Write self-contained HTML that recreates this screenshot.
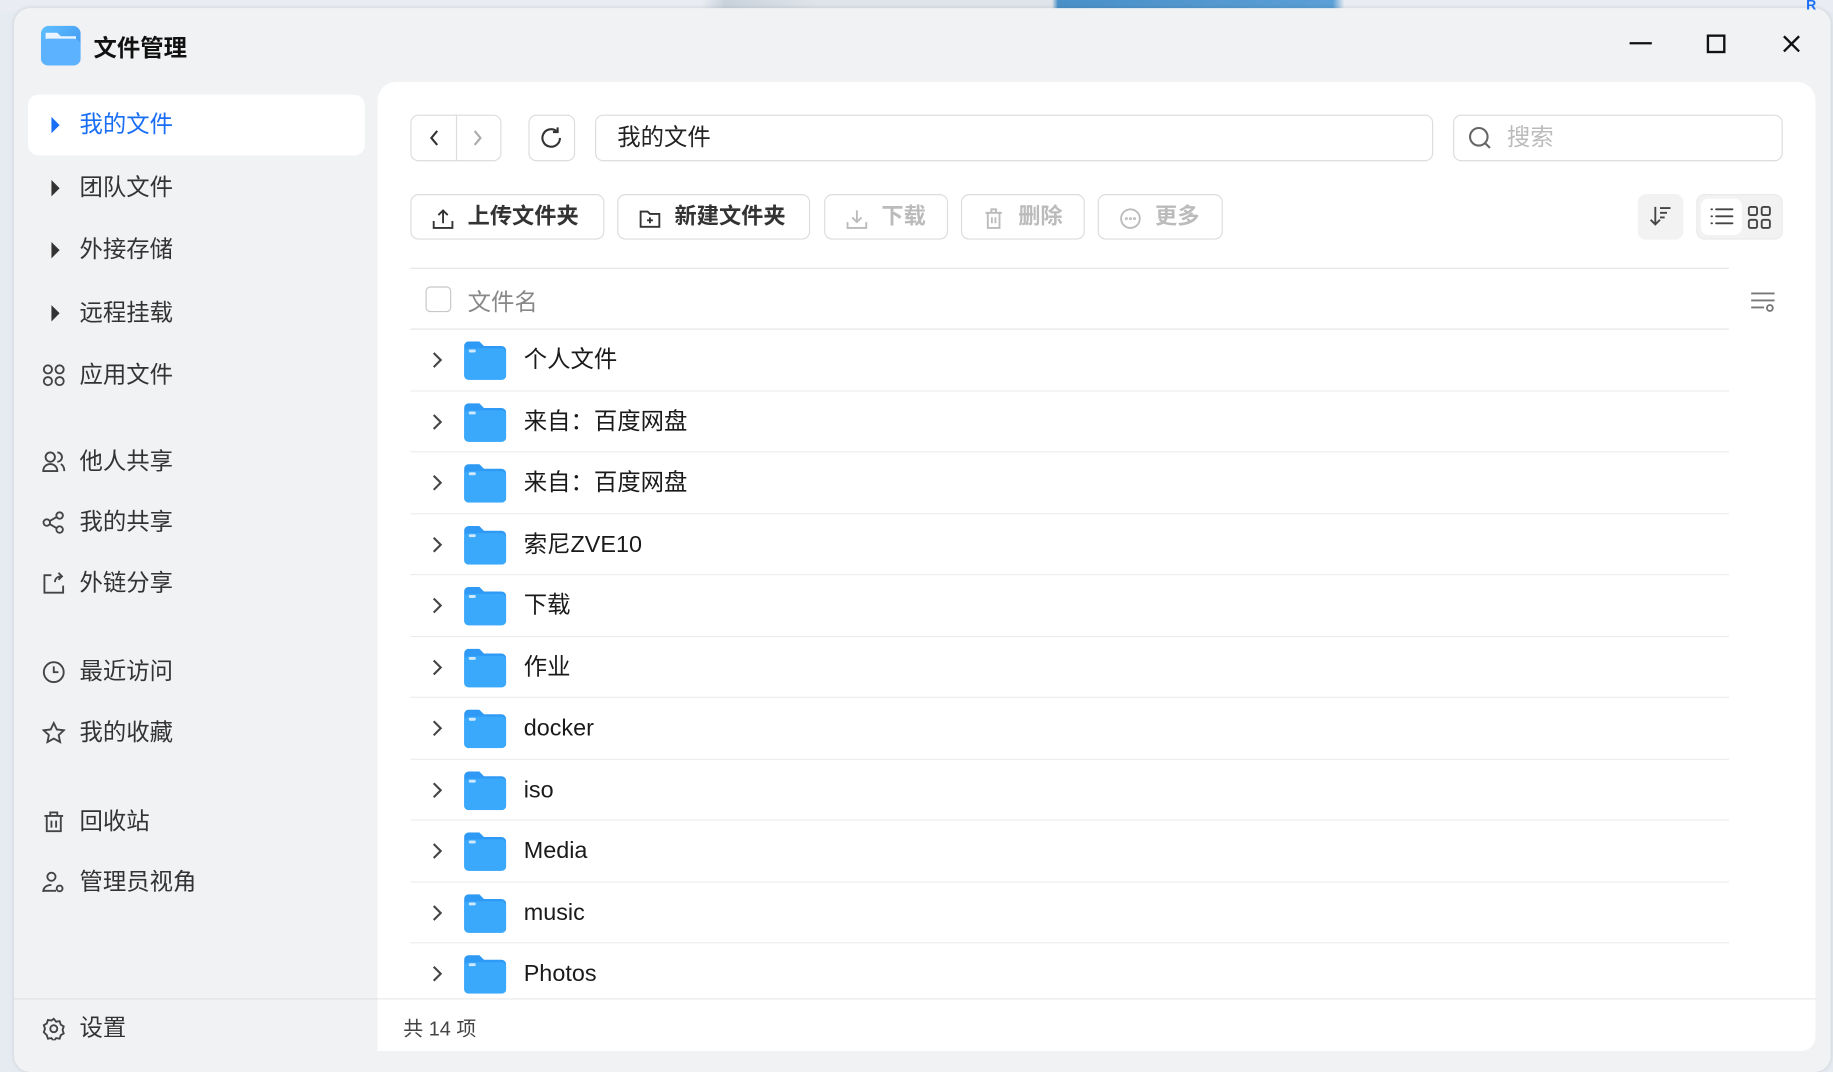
<!DOCTYPE html>
<html><head><meta charset="utf-8"><style>
*{box-sizing:border-box;margin:0;padding:0}
html,body{width:1833px;height:1061px;overflow:hidden;background:#e6ebf2}
body{font-family:"Liberation Sans","Noto Sans CJK SC",sans-serif;color:#222}
#w{position:absolute;left:0;top:0;width:1568px;height:908px;transform:scale(1.16901);transform-origin:0 0}
.bgtop{position:absolute;left:0;top:0;width:1568px;height:10px;background:linear-gradient(90deg,#e9edf3 0,#e9edf3 600px,#c9d2dc 620px,#dfe4ea 700px,#dfe4ea 900px,#4a90c8 905px,#5aa0d6 1140px,#e9edf3 1150px)}
.win{position:absolute;left:12px;top:7px;width:1554px;height:910px;background:#f1f2f4;border-radius:14px;box-shadow:0 0 4px rgba(0,0,0,.12)}
.a{position:absolute}
.title{left:80px;top:25px;font-size:20px;font-weight:bold;color:#111}
.si{position:absolute;left:0;height:52px;width:290px;font-size:20px;color:#333;line-height:52px}
.si span{position:absolute;left:56px}
.si svg{position:absolute;left:24px;top:16px}
.act{left:24px!important;top:81px;width:288px;background:#fff;border-radius:9px}
.panel{position:absolute;left:323px;top:70px;width:1230px;height:829px;background:#fff;border-radius:16px 16px 12px 0}
.bx{position:absolute;border:1px solid #dcdcdc;border-radius:7px;background:#fff}
.btn{position:absolute;top:166px;height:39px;border:1px solid #dcdcdc;border-radius:7px;font-size:19px;font-weight:bold;line-height:37px;color:#333}
.btn svg{position:absolute;left:17px;top:10px}
.btn span{position:absolute;left:48px}
.dis{color:#bbb}
.hl{position:absolute;left:351px;width:1128px;height:1px;background:#e4e4e4}
.row{position:absolute;left:351px;width:1128px;height:52px}
.row .ch{position:absolute;left:17px;top:18px}
.row .fd{position:absolute;left:46px;top:10px}
.row .nm{position:absolute;left:97px;top:0;line-height:52px;font-size:20px;color:#1a1a1a}
</style></head><body><div id="w">
<div class="bgtop"></div>
<div class="win"></div>
<svg class="a" style="left:35px;top:22px" width="34" height="34" viewBox="0 0 34 34"><defs><linearGradient id="lg" x1="0" y1="0" x2="1" y2="1"><stop offset="0" stop-color="#5ec0ff"/><stop offset="1" stop-color="#3b8ef0"/></linearGradient></defs><rect x="0" y="0" width="34" height="34" rx="7" fill="url(#lg)"/><path d="M4 6h10l3 3h13v3H4z" fill="#e8f4ff"/><rect x="0" y="11" width="34" height="23" rx="6" fill="#5cb2ff"/></svg>
<div class="a title">文件管理</div>
<svg class="a" style="left:1393px;top:28px" width="150" height="20"><path d="M1 9h19" stroke="#111" stroke-width="2"/><rect x="68" y="2.5" width="14" height="14" fill="none" stroke="#111" stroke-width="2"/><path d="M133 3l13 13M146 3l-13 13" stroke="#111" stroke-width="2"/></svg>
<div class="si act" style="top:81px;color:#1a6ef5"><svg style="left:18px" width="10" height="20" viewBox="0 0 10 20"><path d="M2 3l7 7-7 7z" fill="#1a6ef5"/></svg><span style="left:44px">我的文件</span></div>
<div class="si" style="top:135px;left:18px"><svg style="left:24px" width="10" height="20"><path d="M2 3l7 7-7 7z" fill="#333"/></svg><span style="left:50px">团队文件</span></div>
<div class="si" style="top:188px;left:18px"><svg style="left:24px" width="10" height="20"><path d="M2 3l7 7-7 7z" fill="#333"/></svg><span style="left:50px">外接存储</span></div>
<div class="si" style="top:242px;left:18px"><svg style="left:24px" width="10" height="20"><path d="M2 3l7 7-7 7z" fill="#333"/></svg><span style="left:50px">远程挂载</span></div>
<div class="si" style="top:295px;left:12px"><svg width="20" height="20" fill="none" stroke="#444" stroke-width="1.6"><circle cx="5" cy="5" r="3.5"/><circle cx="15" cy="5" r="3.5"/><circle cx="5" cy="15" r="3.5"/><circle cx="15" cy="15" r="3.5"/></svg><span>应用文件</span></div>
<div class="si" style="top:369px;left:12px"><svg width="20" height="20" fill="none" stroke="#444" stroke-width="1.6"><circle cx="7" cy="6" r="4"/><path d="M1 18c0-4 3-6 6-6s6 2 6 6zM13 2a4 4 0 0 1 0 8M16 12c2 1 3 3 3 6"/></svg><span>他人共享</span></div>
<div class="si" style="top:421px;left:12px"><svg width="20" height="20" fill="none" stroke="#444" stroke-width="1.6"><circle cx="15" cy="4" r="2.8"/><circle cx="4" cy="10" r="2.8"/><circle cx="15" cy="16" r="2.8"/><path d="M6.5 8.7l6-3.5M6.5 11.3l6 3.5"/></svg><span>我的共享</span></div>
<div class="si" style="top:473px;left:12px"><svg width="20" height="20" fill="none" stroke="#444" stroke-width="1.6"><path d="M8 3H2v15h16v-6M11 9c0-3 2-5 6-5M14 1l3 3-3 3"/></svg><span>外链分享</span></div>
<div class="si" style="top:549px;left:12px"><svg width="20" height="20" fill="none" stroke="#444" stroke-width="1.6"><circle cx="10" cy="10" r="8.5"/><path d="M10 5v5h4"/></svg><span>最近访问</span></div>
<div class="si" style="top:601px;left:12px"><svg width="20" height="20" fill="none" stroke="#444" stroke-width="1.6"><path d="M10 1.5l2.6 5.5 6 .7-4.4 4.1 1.2 6-5.4-3-5.4 3 1.2-6L1.4 7.7l6-.7z"/></svg><span>我的收藏</span></div>
<div class="si" style="top:677px;left:12px"><svg width="20" height="20" fill="none" stroke="#444" stroke-width="1.6"><path d="M2 5h16M7 5V2h6v3M4 5v13h12V5M8 9v6M12 9v6"/></svg><span>回收站</span></div>
<div class="si" style="top:729px;left:12px"><svg width="20" height="20" fill="none" stroke="#444" stroke-width="1.6"><circle cx="8" cy="5" r="3.5"/><path d="M1 18c0-4 3-6 7-6M12 17h-11"/><circle cx="15" cy="15" r="2.5"/></svg><span>管理员视角</span></div>
<div class="a" style="left:12px;top:854px;width:311px;height:1px;background:#e0e0e0"></div>
<div class="si" style="top:854px;left:12px"><svg width="20" height="20" fill="none" stroke="#444" stroke-width="1.6"><circle cx="10" cy="10" r="3"/><path d="M10 1.5l2 2.5 3-.5 1 3 2.5 1.5-1 3 1 3-2.5 1.5-1 3-3-.5-2 2.5-2-2.5-3 .5-1-3L1.5 13l1-3-1-3L4 5.5l1-3 3 .5z"/></svg><span>设置</span></div>
<div class="panel"></div>
<div class="bx" style="left:351px;top:98px;width:78px;height:40px"></div>
<div class="a" style="left:390px;top:98px;width:1px;height:40px;background:#dcdcdc"></div>
<svg class="a" style="left:364px;top:108px" width="60" height="20" fill="none" stroke-width="1.8"><path d="M10 4l-5 6 5 6" stroke="#333"/><path d="M42 4l5 6-5 6" stroke="#aaa"/></svg>
<div class="bx" style="left:452px;top:98px;width:40px;height:40px"></div>
<svg class="a" style="left:461px;top:107px" width="22" height="22" fill="none" stroke="#333" stroke-width="1.8"><path d="M18 11a7.5 7.5 0 1 1-3-6"/><path d="M16 2v4h-4"/></svg>
<div class="bx" style="left:509px;top:98px;width:717px;height:40px;font-size:20px;line-height:38px;padding-left:18px">我的文件</div>
<div class="bx" style="left:1243px;top:98px;width:282px;height:40px;font-size:20px;line-height:38px;padding-left:45px;color:#bbb">搜索</div>
<svg class="a" style="left:1255px;top:107px" width="22" height="22" fill="none" stroke="#666" stroke-width="1.8"><circle cx="10" cy="10" r="7.5"/><path d="M15.5 15.5l4 4"/></svg>
<div class="btn" style="left:351px;width:166px"><svg width="20" height="20" fill="none" stroke="#333" stroke-width="1.6"><path d="M10 14V3M6 7l4-4 4 4M2 12v6h16v-6"/></svg><span>上传文件夹</span></div>
<div class="btn" style="left:528px;width:165px"><svg width="20" height="20" fill="none" stroke="#333" stroke-width="1.6"><path d="M2 4h6l2 2h8v11H2zM10 9v5M7.5 11.5h5"/></svg><span>新建文件夹</span></div>
<div class="btn dis" style="left:705px;width:106px"><svg width="20" height="20" fill="none" stroke="#bbb" stroke-width="1.6"><path d="M10 3v10M6 9l4 4 4-4M2 13v5h16v-5"/></svg><span>下载</span></div>
<div class="btn dis" style="left:822px;width:106px"><svg width="20" height="20" fill="none" stroke="#bbb" stroke-width="1.6"><path d="M3 5h14M8 5V2h4v3M5 5v13h10V5M8.5 9v5M11.5 9v5"/></svg><span>删除</span></div>
<div class="btn dis" style="left:939px;width:107px"><svg width="20" height="20" fill="none" stroke="#bbb" stroke-width="1.6"><circle cx="10" cy="10" r="8"/><circle cx="6.5" cy="10" r=".5"/><circle cx="10" cy="10" r=".5"/><circle cx="13.5" cy="10" r=".5"/></svg><span>更多</span></div>
<div class="a" style="left:1401px;top:166px;width:39px;height:39px;background:#f2f2f2;border-radius:7px"></div>
<svg class="a" style="left:1410px;top:174px" width="22" height="22" fill="none" stroke="#444" stroke-width="1.6"><path d="M6 3v15M2 14l4 4 4-4M10 4h9M10 8h6M10 12h4"/></svg>
<div class="a" style="left:1451px;top:166px;width:74px;height:39px;background:#f2f2f2;border-radius:7px;border:1px solid #eaeaea"></div>
<div class="a" style="left:1455px;top:170px;width:35px;height:31px;background:#fff;border-radius:6px"></div>
<svg class="a" style="left:1461px;top:175px" width="60" height="22" fill="none" stroke="#444" stroke-width="1.6"><path d="M3 4h.5M3 10h.5M3 16h.5M7 4h14M7 10h14M7 16h14" stroke-linecap="round"/><rect x="35" y="2" width="7" height="7" rx="1.5"/><rect x="46" y="2" width="7" height="7" rx="1.5"/><rect x="35" y="13" width="7" height="7" rx="1.5"/><rect x="46" y="13" width="7" height="7" rx="1.5"/></svg>
<div class="hl" style="top:229px"></div>
<div class="a" style="left:364px;top:245px;width:22px;height:22px;border:1.5px solid #c8c8c8;border-radius:4px"></div>
<div class="a" style="left:400px;top:242px;font-size:20px;color:#888">文件名</div>
<svg class="a" style="left:1497px;top:248px" width="22" height="20" fill="none" stroke="#777" stroke-width="1.6"><path d="M1 3h20M1 9h20M1 15h11"/><circle cx="17" cy="15.5" r="2.5"/></svg>
<div class="hl" style="top:281px"></div>
<div id="rows"></div>
<div class="a" style="left:323px;top:854px;width:1230px;height:1px;background:#e8e8e8"></div>
<div class="a" style="left:345px;top:866px;font-size:17px;color:#444">共 14 项</div>
<div class="a" style="left:1545px;top:-3px;font-size:12px;color:#1a6ef5;font-weight:bold">R</div>
</div>
<script>
var n=["个人文件","来自：百度网盘","来自：百度网盘","索尼ZVE10","下载","作业","docker","iso","Media","music","Photos"],h="";
for(var i=0;i<n.length;i++){var t=282+i*52.5;h+='<div class="row" style="top:'+t+'px"><svg class="ch" width="12" height="16"><path d="M3 2l6 6-6 6" fill="none" stroke="#444" stroke-width="1.8"/></svg><svg class="fd" width="36" height="33" viewBox="0 0 36 33"><path d="M0 4a4 4 0 0 1 4-4h9l4 4h15a4 4 0 0 1 4 4v21a4 4 0 0 1-4 4H4a4 4 0 0 1-4-4z" fill="#2f9af5"/><rect x="0" y="6" width="36" height="27" rx="4" fill="#3aa8fb"/><rect x="4" y="7" width="6" height="2.5" rx="1.2" fill="#cfe9ff"/></svg><div class="nm">'+n[i]+'</div></div>';if(i<10)h+='<div class="hl" style="top:'+(t+51.5)+'px;background:#ececec"></div>';}
document.getElementById('rows').outerHTML=h;
</script>
</body></html>
